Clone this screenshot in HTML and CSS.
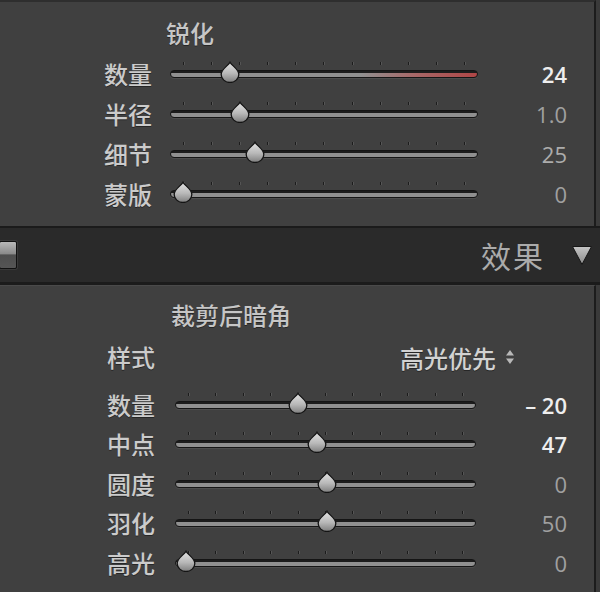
FILE: index.html
```html
<!DOCTYPE html>
<html lang="zh-CN">
<head>
  <meta charset="UTF-8">
  <title>锐化 / 效果</title>
  <link rel="stylesheet" href="styles.css">
</head>
<body>
  <svg width="0" height="0" class="defs">
    <defs>
      <linearGradient id="thumbFill" x1="0" y1="0" x2="0" y2="1">
        <stop offset="0" stop-color="#e4e4e4"/>
        <stop offset="0.55" stop-color="#b8b8b8"/>
        <stop offset="1" stop-color="#7e7e7e"/>
      </linearGradient>
      <symbol id="thumb" viewBox="0 0 20 22">
        <path d="M10 1.2 C11.6 4.6 18.8 8 18.8 13.4 A8.8 8.1 0 0 1 1.2 13.4 C1.2 8 8.4 4.6 10 1.2 Z" fill="url(#thumbFill)" stroke="#141414" stroke-width="1.3"/>
      </symbol>
    </defs>
  </svg>

  <div class="panel sharpen">
    <div class="title">锐化</div>

    <div class="row">
      <span class="label">数量</span>
      <div class="slider">
        <div class="ticks"><i></i><i></i><i></i><i></i><i></i><i></i><i></i><i></i><i></i><i></i><i></i></div>
        <div class="track warm"><svg class="thumb" style="left:19.3%"><use href="#thumb"/></svg></div>
      </div>
      <span class="value bright">24</span>
    </div>
    <div class="row">
      <span class="label">半径</span>
      <div class="slider">
        <div class="ticks"><i></i><i></i><i></i><i></i><i></i><i></i><i></i><i></i><i></i><i></i><i></i></div>
        <div class="track"><svg class="thumb" style="left:22.4%"><use href="#thumb"/></svg></div>
      </div>
      <span class="value">1.0</span>
    </div>
    <div class="row">
      <span class="label">细节</span>
      <div class="slider">
        <div class="ticks"><i></i><i></i><i></i><i></i><i></i><i></i><i></i><i></i><i></i><i></i><i></i></div>
        <div class="track"><svg class="thumb" style="left:27.6%"><use href="#thumb"/></svg></div>
      </div>
      <span class="value mid">25</span>
    </div>
    <div class="row">
      <span class="label">蒙版</span>
      <div class="slider">
        <div class="ticks"><i></i><i></i><i></i><i></i><i></i><i></i><i></i><i></i><i></i><i></i><i></i></div>
        <div class="track"><svg class="thumb" style="left:3.9%"><use href="#thumb"/></svg></div>
      </div>
      <span class="value">0</span>
    </div>
  </div>

  <div class="header">
    <span class="toggle"></span>
    <span class="header-title">效果</span>
    <svg class="collapse" viewBox="0 0 22 22" width="22" height="22">
      <defs>
        <linearGradient id="triFill" x1="0" y1="0" x2="0" y2="1">
          <stop offset="0" stop-color="#c6c6c6"/>
          <stop offset="1" stop-color="#8a8a8a"/>
        </linearGradient>
      </defs>
      <path d="M1.5 2.5 H20.5 L11 20.5 Z" fill="url(#triFill)" stroke="#161616" stroke-width="1"/>
    </svg>
  </div>

  <div class="panel vignette">
    <div class="title">裁剪后暗角</div>

    <div class="row style-row">
      <span class="label">样式</span>
      <div class="select">
        <span>高光优先</span>
        <svg viewBox="0 0 10 18" width="10" height="18">
          <path d="M5 2 L9 7.5 H1 Z M5 16 L9 10.5 H1 Z" fill="#b8b8b8"/>
        </svg>
      </div>
    </div>

    <div class="rows">
      <div class="row">
        <span class="label">数量</span>
        <div class="slider">
          <div class="ticks"><i></i><i></i><i></i><i></i><i></i><i></i><i></i><i></i><i></i><i></i><i></i></div>
          <div class="track"><svg class="thumb" style="left:40.9%"><use href="#thumb"/></svg></div>
        </div>
        <span class="value bright">&ndash; 20</span>
      </div>
      <div class="row">
        <span class="label">中点</span>
        <div class="slider">
          <div class="ticks"><i></i><i></i><i></i><i></i><i></i><i></i><i></i><i></i><i></i><i></i><i></i></div>
          <div class="track"><svg class="thumb" style="left:47.2%"><use href="#thumb"/></svg></div>
        </div>
        <span class="value bright">47</span>
      </div>
      <div class="row">
        <span class="label">圆度</span>
        <div class="slider">
          <div class="ticks"><i></i><i></i><i></i><i></i><i></i><i></i><i></i><i></i><i></i><i></i><i></i></div>
          <div class="track"><svg class="thumb" style="left:50.5%"><use href="#thumb"/></svg></div>
        </div>
        <span class="value">0</span>
      </div>
      <div class="row">
        <span class="label">羽化</span>
        <div class="slider">
          <div class="ticks"><i></i><i></i><i></i><i></i><i></i><i></i><i></i><i></i><i></i><i></i><i></i></div>
          <div class="track"><svg class="thumb" style="left:50.5%"><use href="#thumb"/></svg></div>
        </div>
        <span class="value">50</span>
      </div>
      <div class="row">
        <span class="label">高光</span>
        <div class="slider">
          <div class="ticks"><i></i><i></i><i></i><i></i><i></i><i></i><i></i><i></i><i></i><i></i><i></i></div>
          <div class="track"><svg class="thumb" style="left:3.3%"><use href="#thumb"/></svg></div>
        </div>
        <span class="value">0</span>
      </div>
    </div>
  </div>
</body>
</html>
```

FILE: styles.css
```css
html, body {
  margin: 0;
  height: 100%;
}
body {
  background: #3a3a3a;
  font-family: "Noto Sans CJK SC", "Noto Sans", sans-serif;
  color: #c8c8c8;
  overflow: hidden;
}
.defs {
  position: absolute;
}
.panel {
  background: #404040;
  width: 594px;
  border-right: 2px solid #1c1c1c;
  box-sizing: content-box;
}
.sharpen {
  border-top: 2px solid #2e2e2e;
  padding: 16px 0 12px;
}
.sharpen .title {
  margin-bottom: 6px;
}
.vignette {
  padding-top: 14px;
  height: 320px;
  border-top: 1px solid #4a4a4a;
}
.title {
  font-size: 24px;
  font-weight: 500;
  line-height: 30px;
  color: #c6c6c6;
  text-shadow: 0 1px 0 #262626;
}
.sharpen .title {
  padding-left: 166px;
}
.vignette .title {
  padding-left: 171px;
}
.row {
  display: grid;
  grid-template-columns: 152px 308px 1fr;
  column-gap: 18px;
  align-items: center;
  height: 40px;
}
.vignette .row {
  grid-template-columns: 155px 301px 1fr;
  column-gap: 20px;
  height: 39.5px;
}
.vignette .style-row {
  height: 40px;
  margin: 7px 0 8px;
}
.label {
  font-size: 24px;
  font-weight: 500;
  text-align: right;
  color: #cbcbcb;
  text-shadow: 0 1px 0 #262626;
  line-height: 1;
}
.slider {
  display: flex;
  flex-direction: column;
  gap: 5px;
  padding-bottom: 8px;
}
.ticks {
  display: flex;
  justify-content: space-between;
  padding: 0 13px;
  height: 3px;
}
.ticks i {
  width: 1px;
  height: 3px;
  background: #1c1c1c;
  box-shadow: 1px 0 0 #555;
}
.track {
  position: relative;
  height: 6px;
  border: 1px solid #151515;
  border-radius: 5px;
  background:
    linear-gradient(#1c1c1c 0 2px, transparent 2px),
    linear-gradient(90deg, #909090, #909090);
  box-shadow: 0 1px 0 rgba(255, 255, 255, 0.07);
}
.track.warm {
  background:
    linear-gradient(#1c1c1c 0 2px, transparent 2px),
    linear-gradient(90deg, #909090 62%, #a86767 80%, #b04646);
}
.thumb {
  position: absolute;
  top: -10px;
  width: 21px;
  height: 22px;
  transform: translateX(-50%);
  overflow: visible;
}
.value {
  font-family: "Open Sans", "Noto Sans", sans-serif;
  font-size: 22px;
  text-align: right;
  padding-right: 27px;
  color: #a0a0a0;
  line-height: 1;
}
.value.mid {
  color: #acacac;
}
.value.bright {
  color: #eeeeee;
  font-weight: 600;
}
.select {
  grid-column: 2 / 4;
  display: flex;
  align-items: center;
  gap: 9px;
  margin-left: 225px;
  font-size: 24px;
  font-weight: 500;
  color: #d2d2d2;
  text-shadow: 0 1px 0 #262626;
}
.header {
  display: flex;
  align-items: center;
  height: 54px;
  background: #2a2a2a;
  border-top: 2px solid #1b1b1b;
  border-bottom: 3px solid #1b1b1b;
}
.toggle {
  width: 16px;
  height: 26px;
  margin-left: -1px;
  border: 1.5px solid #111;
  border-radius: 2px;
  background: linear-gradient(#b9b9b9, #8a8a8a 45%, #4e4e4e 50%, #555 100%);
  box-shadow: 0 0 0 1px #3a3a3a;
}
.header-title {
  margin-left: auto;
  font-size: 30px;
  letter-spacing: 2px;
  color: #ababab;
}
.collapse {
  margin: 0 7px 0 26px;
}
```
